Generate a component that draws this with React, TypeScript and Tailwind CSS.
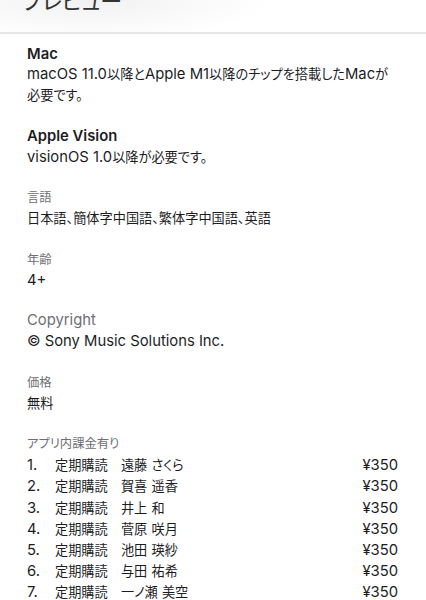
import React from "react";

const font = { fontFamily: 'Inter, "Noto Sans CJK JP", sans-serif' };

const CJK = /([\u3000-\u30ff\u3400-\u9fff\uff00-\uffef]+)/;

function J({ text, small }: { text: string; small?: boolean }) {
  const parts = text.split(CJK);
  return (
    <>
      {parts.map((p, i) =>
        CJK.test(p) ? (
          <span key={i} className={small ? "text-[12.3px] leading-none" : "text-[13.2px] leading-none"}>
            {p}
          </span>
        ) : (
          <React.Fragment key={i}>{p}</React.Fragment>
        )
      )}
    </>
  );
}

function Section({ label, bold, value }: { label: string; bold?: boolean; value: string }) {
  return (
    <div className="mb-[20px]">
      <div
        className={
          bold
            ? "text-[14.8px] leading-[20.75px] font-semibold text-[#1d1d1f]"
            : "text-[14.8px] leading-[20.75px] text-[#6e6e73]"
        }
      >
        <J text={label} small={!bold} />
      </div>
      <div className="text-[14.8px] leading-[20.75px] text-[#1d1d1f]">
        <J text={value} />
      </div>
    </div>
  );
}

const rows = [
  "遠藤 さくら",
  "賀喜 遥香",
  "井上 和",
  "菅原 咲月",
  "池田 瑛紗",
  "与田 祐希",
  "一ノ瀬 美空",
];

export default function App() {
  return (
    <div className="w-[426px] h-[600px] overflow-hidden bg-white [font-feature-settings:'palt']" style={font}>
      <div className="h-[34px] overflow-hidden border-b-2 border-[#e6e6e6] bg-[radial-gradient(ellipse_180px_40px_at_90px_0px,#f1f1f1,#ffffff)]">
        <div className="pl-[22px] -mt-[13px] text-[22px] leading-[28px] text-[#333333]">プレビュー</div>
      </div>
      <div className="pl-[27px] pr-[28px] pt-[9.5px]">
        <Section label="Mac" bold value="macOS 11.0以降とApple M1以降のチップを搭載したMacが必要です。" />
        <Section label="Apple Vision" bold value="visionOS 1.0以降が必要です。" />
        <Section label="言語" value="日本語、簡体字中国語、繁体字中国語、英語" />
        <Section label="年齢" value="4+" />
        <Section label="Copyright" value="© Sony Music Solutions Inc." />
        <Section label="価格" value="無料" />
        <div>
          <div className="text-[14.8px] leading-[21px] mb-[1px] text-[#6e6e73]">
            <J text="アプリ内課金有り" small />
          </div>
          {rows.map((name, i) => (
            <div key={i} className="flex text-[14.8px] leading-[21.2px] text-[#1d1d1f]">
              <span className="w-[28px] shrink-0">{i + 1}.</span>
              <span className="flex-1">
                <J text={"定期購読　" + name} />
              </span>
              <span>¥350</span>
            </div>
          ))}
        </div>
      </div>
    </div>
  );
}
